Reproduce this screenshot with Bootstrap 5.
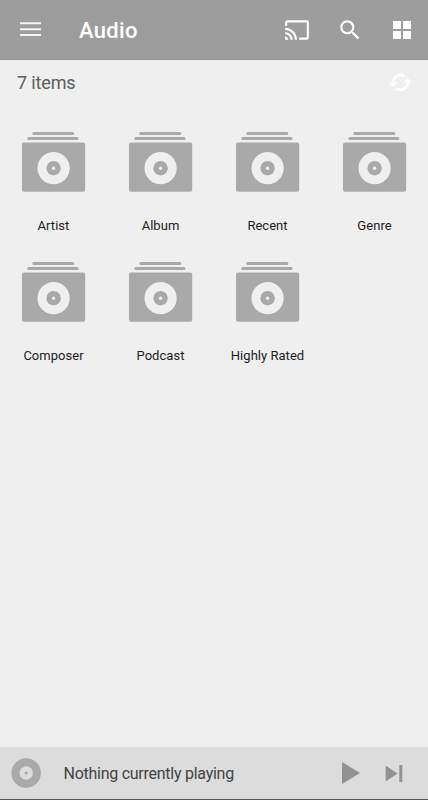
<!DOCTYPE html>
<html lang="en">
<head>
<meta charset="utf-8">
<meta name="viewport" content="width=device-width, initial-scale=1">
<title>Audio</title>
<link href="https://cdn.jsdelivr.net/npm/bootstrap@5.3.0/dist/css/bootstrap.min.css" rel="stylesheet">
<style>
body{font-family:Roboto,"Liberation Sans",sans-serif;background:#efefef;color:#1c1c1c;height:800px;overflow:hidden}
svg{display:block;flex:none}
button{line-height:0}
.topbar{height:60px;background:#9d9d9d;border-bottom:1px solid #929292;padding:0 17px 0 20px;color:#fff}
.title{font-size:22px;font-weight:500;letter-spacing:.3px;line-height:26px;margin:3px 0 0 38px}
.tools{gap:27px}
.view-toggle{margin-left:3px}
.subbar{height:46px;padding:0 16px 0 17px}
.count{font-size:18px;letter-spacing:-.15px;color:#5c5c5c;line-height:22px}
.tile{height:130px;padding-top:26px}
.tile-label{font-size:13px;line-height:18px;margin-top:24px;letter-spacing:.03px;white-space:nowrap}
.player{height:53px;background:#dcdcdc;border-bottom:1px solid #555;padding:0 25px 0 11px}
.track{font-size:16px;letter-spacing:-.26px;color:#434343;line-height:20px;margin:1px 0 0 22.500px}
.controls{gap:25px}
</style>
<script src="https://cdn.jsdelivr.net/npm/bootstrap@5.3.0/dist/js/bootstrap.bundle.min.js"></script>
</head>
<body class="d-flex flex-column">
<svg width="0" height="0" class="position-absolute" aria-hidden="true">
<symbol id="folder" viewBox="0 0 64 61">
<g fill="#a9a9a9"><rect x="10.3" y="0" width="42" height="3" rx="1.5"/><rect x="5.3" y="5" width="51.2" height="3" rx="1.5"/><rect x="0" y="10.6" width="63.2" height="49.2" rx="2"/></g>
<circle cx="31.6" cy="36.2" r="16.1" fill="#efefef"/><circle cx="31.6" cy="36.2" r="7.2" fill="#a9a9a9"/><circle cx="31.6" cy="36.2" r="1.7" fill="#efefef"/>
</symbol>
</svg>
<header class="topbar d-flex align-items-center">
<button class="btn p-0 border-0" aria-label="Menu"><svg width="21" height="15" viewBox="0 0 21 15" fill="#fff" fill-opacity=".9"><path d="M0 .2h21v2H0zM0 6.2h21v2H0zM0 12h21v2H0z"/></svg></button>
<h1 class="title mb-0 me-auto">Audio</h1>
<div class="tools d-flex align-items-center">
<button class="btn p-0 border-0" aria-label="Cast"><svg width="26" height="26" viewBox="0 0 24 24" fill="#fff"><path d="M21 3H3c-1.100 0-2 .9-2 2v3h2V5h18v14h-7v2h7c1.100 0 2-.9 2-2V5c0-1.100-.9-2-2-2zM1 18v3h3c0-1.660-1.340-3-3-3zm0-4v2c2.760 0 5 2.240 5 5h2c0-3.870-3.130-7-7-7zm0-4v2c4.970 0 9 4.030 9 9h2c0-6.080-4.930-11-11-11z"/></svg></button>
<button class="btn p-0 border-0" aria-label="Search"><svg width="26" height="26" viewBox="0 0 24 24" fill="#fff"><path d="M15.500 14h-.79l-.28-.27A6.471 6.471 0 0 0 16 9.500 6.500 6.500 0 1 0 9.500 16c1.610 0 3.090-.59 4.230-1.570l.27.28v.79l5 4.990L20.490 19l-4.990-5zm-6 0C7.010 14 5 11.990 5 9.500S7.010 5 9.500 5 14 7.010 14 9.500 11.990 14 9.500 14z"/></svg></button>
<button class="btn p-0 border-0 view-toggle" aria-label="Grid view"><svg width="18" height="18" viewBox="0 0 18 18" fill="#fff"><path d="M0 0h8v8H0zM10 0h8v8h-8zM0 10h8v8H0zM10 10h8v8h-8z"/></svg></button>
</div>
</header>
<div class="subbar d-flex align-items-center justify-content-between">
<span class="count">7 items</span>
<button class="btn p-0 border-0" aria-label="Refresh"><svg width="23" height="21" viewBox="0 0 23 21" fill="none"><path d="M4.200 10A7.500 7.500 0 0 1 15.800 3.500M18.800 9A7.500 7.500 0 0 1 7.200 15.500" stroke="#fff" stroke-width="2.600"/><path d="M0 9.500h8.400L4.200 14zM14.600 9.500h8.400L18.800 5z" fill="#fff"/></svg></button>
</div>
<main class="row row-cols-4 g-0 flex-grow-1 align-content-start">
<div class="col tile d-flex flex-column align-items-center"><svg width="64" height="61"><use href="#folder"/></svg><span class="tile-label">Artist</span></div>
<div class="col tile d-flex flex-column align-items-center"><svg width="64" height="61"><use href="#folder"/></svg><span class="tile-label">Album</span></div>
<div class="col tile d-flex flex-column align-items-center"><svg width="64" height="61"><use href="#folder"/></svg><span class="tile-label">Recent</span></div>
<div class="col tile d-flex flex-column align-items-center"><svg width="64" height="61"><use href="#folder"/></svg><span class="tile-label">Genre</span></div>
<div class="col tile d-flex flex-column align-items-center"><svg width="64" height="61"><use href="#folder"/></svg><span class="tile-label">Composer</span></div>
<div class="col tile d-flex flex-column align-items-center"><svg width="64" height="61"><use href="#folder"/></svg><span class="tile-label">Podcast</span></div>
<div class="col tile d-flex flex-column align-items-center"><svg width="64" height="61"><use href="#folder"/></svg><span class="tile-label">Highly Rated</span></div>
</main>
<footer class="player d-flex align-items-center">
<svg width="30" height="30" viewBox="0 0 30 30"><circle cx="15.200" cy="15" r="14.700" fill="#a9a9a9"/><circle cx="15.200" cy="15" r="6.700" fill="#dcdcdc"/><circle cx="15.200" cy="15" r="1.500" fill="#a9a9a9"/></svg>
<span class="track me-auto">Nothing currently playing</span>
<div class="controls d-flex align-items-center">
<button class="btn p-0 border-0" aria-label="Play"><svg width="19" height="22" viewBox="0 0 19 22" fill="#929292"><path d="M1 0 19 11 1 22z"/></svg></button>
<button class="btn p-0 border-0" aria-label="Next"><svg width="18" height="17" viewBox="0 0 18 17" fill="#929292"><path d="M.7.5 12.500 8.500.7 16.500zM14.300 0h3v17h-3z"/></svg></button>
</div>
</footer>
</body>
</html>
